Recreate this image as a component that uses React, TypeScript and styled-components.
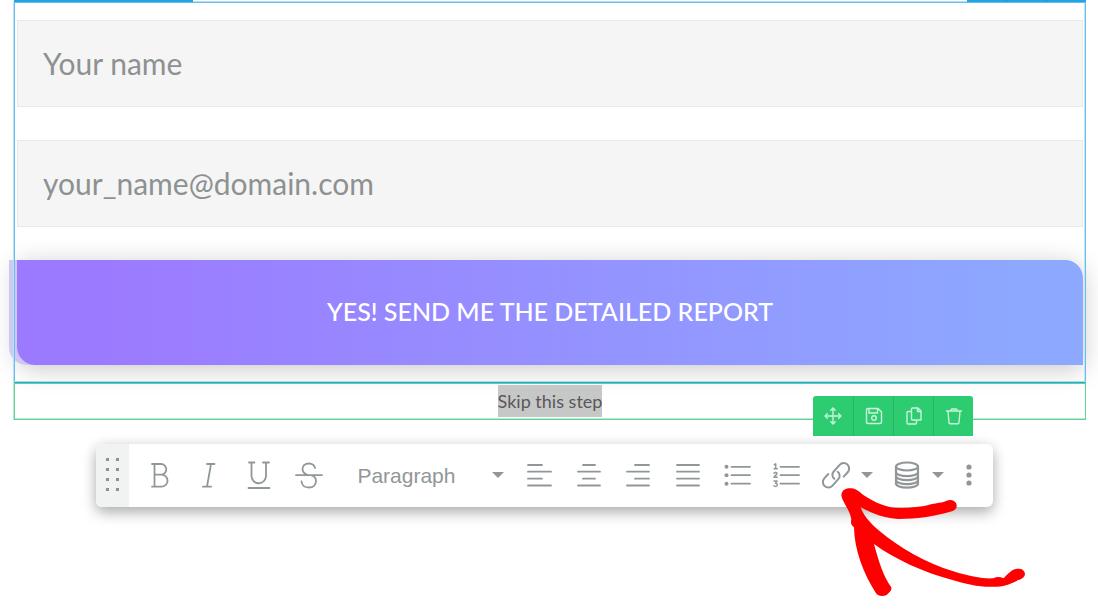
import React from "react";
import styled, { createGlobalStyle, css } from "styled-components";

const GlobalStyle = createGlobalStyle`
  *, *::before, *::after { box-sizing: border-box; }
  body {
    margin: 0;
    background: #fff;
    font-family: Lato, "Liberation Sans", sans-serif;
  }
  button, input, select { font: inherit; }
`;

const Page = styled.main`
  min-height: 100vh;
  padding: 0 12px 0 14px;
`;

const SectionTabs = styled.div`
  display: flex;
  justify-content: space-between;
  height: 2px;
  box-shadow: inset 0 -1px 0 #b9e1f8;
`;

const SectionTab = styled.div<{ $width: number }>`
  display: flex;
  width: ${(p) => p.$width}px;
  background: #22a4e4;
`;

const TabCell = styled.span`
  flex: 1;
  & + & {
    border-left: 1px solid #1f92cb;
  }
`;

const FormFrame = styled.form`
  position: relative;
  display: flex;
  flex-direction: column;
  gap: 33px;
  padding: 18px 3px 19px;

  &::after {
    content: "";
    position: absolute;
    inset: 0;
    border: 1px solid #66bdee;
    box-shadow: -1px 0 0 #b9e1f8, inset -1px 0 0 #c4e5f8;
    pointer-events: none;
  }
`;

const Field = styled.input`
  width: 100%;
  height: 87px;
  padding: 0 25px 2px;
  border: 1px solid #e9e9e9;
  border-radius: 0;
  background: #f5f5f5;
  color: #8d9192;
  font-size: 30px;
  outline: none;

  &::placeholder {
    color: #8d9192;
    opacity: 1;
  }
`;

const SubmitButton = styled.button`
  height: 105px;
  padding: 0 0 4px;
  border: 0;
  border-radius: 0 18px 0 18px;
  background: linear-gradient(90deg, #9c7aff 8%, #8da8ff 94%);
  box-shadow: -8px 0 0 #cfc8f3, 0 4px 26px rgba(0, 0, 0, 0.22);
  color: #fff;
  font-size: 25px;
  font-weight: 500;
  text-transform: uppercase;
`;

const SkipFrame = styled.section`
  position: relative;
  display: flex;
  justify-content: center;
  height: 38px;
  margin-top: -2px;
  padding-top: 2px;
  border: 1px solid #62d391;
  border-top-color: #25b59a;
  box-shadow: -1px 0 0 #b8ebcd, inset 0 -1px 0 #b8ebcd, 0 -1px 0 #a9e2cc;
`;

const SkipLink = styled.a`
  height: 32px;
  background: #c6c8c7;
  color: #5b5758;
  font-size: 18px;
  line-height: 32px;
  text-decoration: none;
`;

const BlockActions = styled.div`
  position: absolute;
  top: 13px;
  right: 112px;
  display: flex;
  height: 40px;
  overflow: hidden;
  border-radius: 3px 3px 0 0;
  background: #2ecc71;
`;

const BlockAction = styled.button`
  display: grid;
  place-items: center;
  width: 40px;
  padding: 0;
  border: 0;
  background: none;
  color: #c9f4da;
  & + & {
    border-left: 1px solid #29b765;
  }
`;

const Toolbar = styled.div`
  position: relative;
  display: flex;
  height: 63px;
  margin: 24px 93px 0 82px;
  padding-right: 9px;
  border-radius: 6px;
  background: #fff;
  box-shadow: 0 6px 14px rgba(0, 0, 0, 0.28), 0 0 14px rgba(0, 0, 0, 0.08);
  color: #919799;
`;

const DragHandle = styled.div`
  display: grid;
  place-items: center;
  width: 33px;
  margin-right: 6px;
  padding-bottom: 2px;
  border-radius: 6px 0 0 6px;
  background: #f1f3f2;
`;

const plainButton = css`
  display: flex;
  align-items: center;
  padding: 0 0 2px;
  border: 0;
  background: none;
  color: inherit;
`;

const ToolButton = styled.button`
  ${plainButton}
  flex: 1;
  justify-content: center;
`;

const SplitTool = styled.div`
  position: relative;
  display: flex;
  width: 71px;
`;

const SplitMain = styled.button`
  ${plainButton}
  justify-content: center;
  width: 48px;
`;

const SplitCaret = styled.button`
  ${plainButton}
  justify-content: center;
  width: 14px;
`;

const MoreButton = styled.button`
  ${plainButton}
  justify-content: center;
  width: 30px;
`;

const FormatPicker = styled.label`
  display: flex;
  align-items: center;
  width: 181px;
  padding: 0 10px 2px 24px;
`;

const FormatSelect = styled.select`
  flex: 1;
  min-width: 0;
  padding: 2px 0 0;
  border: 0;
  appearance: none;
  background: none;
  color: inherit;
  font-family: "Liberation Sans", Arial, sans-serif;
  font-size: 21px;
  line-height: 28px;
`;

const Pointer = styled.svg`
  position: absolute;
  top: 43px;
  left: 28px;
  z-index: 2;
  pointer-events: none;
`;

const Caret = () => (
  <svg width="12" height="6" viewBox="0 0 12 6" fill="currentColor" aria-hidden="true">
    <path d="M0 0h12L6 6z" />
  </svg>
);

type IconProps = { children: React.ReactNode; size?: number; stroke?: number };

const Icon = ({ children, size = 30, stroke = 1.8 }: IconProps) => (
  <svg
    width={size}
    height={size}
    viewBox={`0 0 ${size} ${size}`}
    fill="none"
    stroke="currentColor"
    strokeWidth={stroke}
    strokeLinecap="round"
    strokeLinejoin="round"
    aria-hidden="true"
  >
    {children}
  </svg>
);

const textTools = [
  {
    label: "Bold",
    icon: <path d="M7 4h9a5.300 5.300 0 0 1 0 10.600H9.500M16.500 14.600a6 6 0 0 1 0 12.100H7M9.500 4v22.700" />,
  },
  { label: "Italic", icon: <path d="M13 4h7.500M9 26.700h8M17 4l-4 22.700" /> },
  { label: "Underline", icon: <path d="M5 2.500h5.500M19 2.500h6M7.500 2.500v13.500a7 7 0 0 0 14.500 0V2.500M4.500 28h21" /> },
  {
    label: "Strikethrough",
    icon: (
      <path d="M21 8A6.200 5 0 0 0 15 3.500c-4 0-6.500 2.300-6.500 5.500 0 3 2.200 5 5.500 6.200M2 15.200h26M17 15.200c3.500 1 5 3.300 5 5.800 0 4-3 6.500-7 6.500s-7-2-7.500-6" />
    ),
  },
];

const alignTools = [
  { label: "Align left", icon: <path d="M4 5h14M4 11.700h23M4 18.700h14M4 25.500h23" /> },
  { label: "Align center", icon: <path d="M9 5h12M4 11.700h22M9 18.700h12M4 25.500h22" /> },
  { label: "Align right", icon: <path d="M12 5h14M4 11.700h22M12 18.700h14M4 25.500h22" /> },
  { label: "Justify", icon: <path d="M4 5h22M4 11.700h22M4 18.700h22M4 25.500h22" /> },
  {
    label: "Bulleted list",
    icon: (
      <>
        <path d="M8.500 6.800h18.500M8.500 15.200h18.500M8.500 23.700h18.500" />
        <g fill="currentColor" stroke="none">
          <circle cx="3.500" cy="6.800" r="2" />
          <circle cx="3.500" cy="15.200" r="2" />
          <circle cx="3.500" cy="23.700" r="2" />
        </g>
      </>
    ),
  },
  {
    label: "Numbered list",
    icon: (
      <>
        <path d="M8.500 6.800h18.500M8.500 15.200h18.500M8.500 23.700h18.500" />
        <path
          strokeWidth="1.500"
          d="M2.300 4.700l1.400-.9v4.800M2 8.800h3.300M2 13.200c.8-1 3-.8 3 .5 0 1.200-3 2.200-3 3.600h3.300M2 21h3L3.500 23.200c2.400 0 2.400 3.200 0 3.200-.6 0-1.200-.2-1.600-.6"
        />
      </>
    ),
  },
];

const blockActions = [
  {
    label: "Move",
    icon: <path d="M10 2v16M2 10h16M7.800 4.300L10 2l2.200 2.300M7.800 15.700L10 18l2.200-2.300M4.300 7.800L2 10l2.300 2.200M15.700 7.800L18 10l-2.300 2.200" />,
  },
  {
    label: "Save",
    icon: (
      <>
        <path d="M2.500 4A1.500 1.500 0 0 1 4 2.500H14l3.500 3.500v10a1.500 1.500 0 0 1-1.500 1.500H4A1.500 1.500 0 0 1 2.500 16zM5 2.500v4.500h8.500V2.500" />
        <circle cx="10" cy="12" r="2.300" />
      </>
    ),
  },
  {
    label: "Duplicate",
    icon: <path d="M8.500 2h5.500l3 3V14H8.500a1 1 0 0 1-1-1V3a1 1 0 0 1 1-1zM13.500 2v3.500h3.500M7.500 5.500H4a1 1 0 0 0-1 1V17a1 1 0 0 0 1 1h7.500a1 1 0 0 0 1-1v-3" />,
  },
  {
    label: "Delete",
    icon: <path d="M2.500 5h15M7 5V4a1 1 0 0 1 1-1h4a1 1 0 0 1 1 1v1M4 5l1 11.500A1.200 1.200 0 0 0 6.200 17.700h7.600A1.200 1.200 0 0 0 15 16.500L16 5" />,
  },
];

export default function App() {
  return (
    <>
      <GlobalStyle />
      <Page>
        <SectionTabs>
          <SectionTab $width={179} />
          <SectionTab $width={119}>
            <TabCell />
            <TabCell />
            <TabCell />
          </SectionTab>
        </SectionTabs>
        <FormFrame onSubmit={(e) => e.preventDefault()}>
          <Field type="text" placeholder="Your name" aria-label="Your name" />
          <Field type="email" placeholder="your_name@domain.com" aria-label="Email" />
          <SubmitButton type="submit">Yes! Send me the detailed report</SubmitButton>
        </FormFrame>
        <SkipFrame>
          <SkipLink href="#skip">Skip this step</SkipLink>
          <BlockActions>
            {blockActions.map((action) => (
              <BlockAction key={action.label} type="button" aria-label={action.label}>
                <Icon size={20} stroke={1.4}>{action.icon}</Icon>
              </BlockAction>
            ))}
          </BlockActions>
        </SkipFrame>
        <Toolbar role="toolbar" aria-label="Text formatting">
          <DragHandle>
            <svg width="14" height="34" viewBox="0 0 14 34" fill="#8c9291" aria-hidden="true">
              {[0, 10, 20, 30].map((y) => (
                <path key={y} d={`M0 ${y}h3v3h-3zM10 ${y}h3v3h-3z`} />
              ))}
            </svg>
          </DragHandle>
          {textTools.map((tool) => (
            <ToolButton key={tool.label} type="button" aria-label={tool.label}>
              <Icon>{tool.icon}</Icon>
            </ToolButton>
          ))}
          <FormatPicker>
            <FormatSelect aria-label="Text format" defaultValue="p">
              <option value="p">Paragraph</option>
            </FormatSelect>
            <Caret />
          </FormatPicker>
          {alignTools.map((tool) => (
            <ToolButton key={tool.label} type="button" aria-label={tool.label}>
              <Icon>{tool.icon}</Icon>
            </ToolButton>
          ))}
          <SplitTool>
            <SplitMain type="button" aria-label="Link">
              <Icon stroke={2}>
                <path d="M13.300 18.800a5 5 0 0 1-.6-7.300l6-6.700a5.400 5.400 0 0 1 8 7.400l-4 4.400M16.700 11.800a5 5 0 0 1 .6 7.300l-6 6.700a5.400 5.400 0 0 1-8-7.400l4-4.400" />
              </Icon>
            </SplitMain>
            <SplitCaret type="button" aria-label="Link options">
              <Caret />
            </SplitCaret>
            <Pointer width="190" height="112" viewBox="60 51 570 336" fill="#fe0000" aria-hidden="true">
              <path d="M64 75C66 58 80 54 95 55C108 56 118 65 130 75C165 98 200 113 235 114C280 114 315 108 340 101C360 98 370 97 380 92C392 87 408 92 410 105C411 120 400 123 385 127C340 140 290 147 235 147C195 145 155 130 122 112C128 130 145 155 175 180C240 235 320 280 400 304C450 320 490 327 520 325C530 320 540 320 550 325C560 315 572 303 580 299C592 294 612 294 615 311C614 322 605 327 595 330C575 340 560 348 530 350C480 353 440 343 400 331C310 307 225 268 162 222C175 270 190 320 214 352C216 362 208 368 200 375C190 379 175 380 168 370C130 310 103 240 102 172C92 165 92 155 94 148C90 120 66 95 64 75Z" />
            </Pointer>
          </SplitTool>
          <SplitTool>
            <SplitMain type="button" aria-label="Dynamic text">
              <Icon stroke={2.2}>
                <ellipse cx="15" cy="6.500" rx="11" ry="4" />
                <path d="M4 6.500v17c0 2.300 5 4.200 11 4.200s11-1.900 11-4.200v-17M4 12c0 2.300 5 4.200 11 4.200s11-1.900 11-4.200M4 16c0 2.300 5 4.200 11 4.200s11-1.900 11-4.200M4 20c0 2.300 5 4.200 11 4.200s11-1.900 11-4.200" />
              </Icon>
            </SplitMain>
            <SplitCaret type="button" aria-label="Dynamic text options">
              <Caret />
            </SplitCaret>
          </SplitTool>
          <MoreButton type="button" aria-label="More">
            <svg width="6" height="24" viewBox="0 0 6 24" fill="currentColor" aria-hidden="true">
              <circle cx="3" cy="4" r="2.600" />
              <circle cx="3" cy="12" r="2.600" />
              <circle cx="3" cy="20" r="2.600" />
            </svg>
          </MoreButton>
        </Toolbar>
      </Page>
    </>
  );
}
